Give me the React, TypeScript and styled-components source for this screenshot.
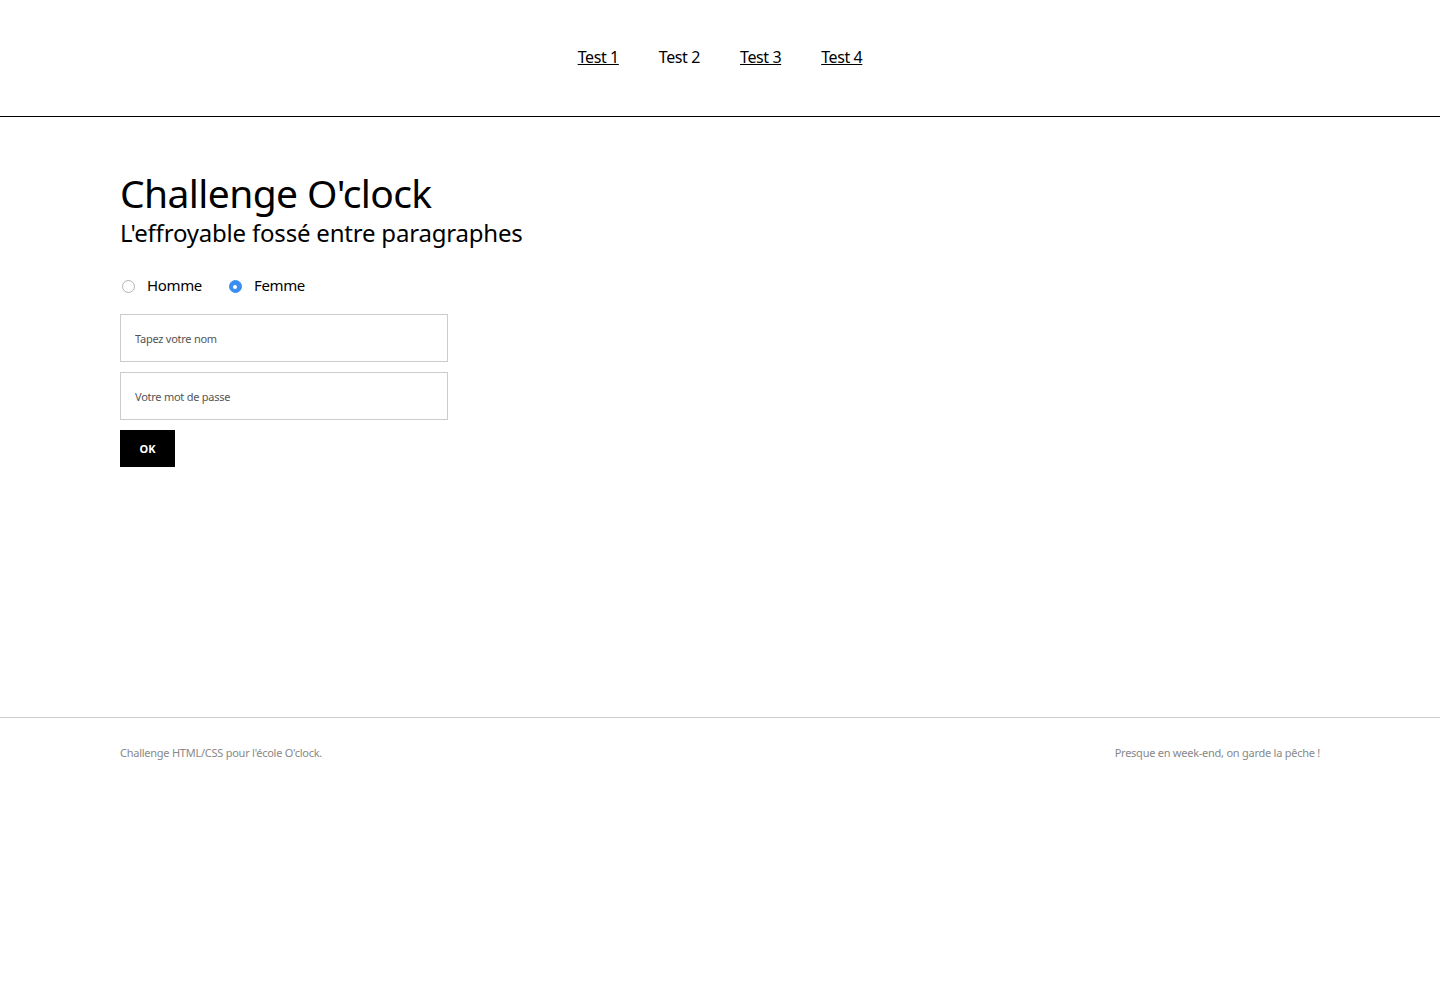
import React from "react";
import styled, { createGlobalStyle } from "styled-components";

const Global = createGlobalStyle`
  html, body { margin: 0; padding: 0; background: #fff; }
  body { font-family: "Noto Sans", "Liberation Sans", sans-serif; color: #000; }
  * { box-sizing: border-box; }
`;

const Header = styled.header`
  height: 117px;
  border-bottom: 1px solid #000;
  display: flex;
  justify-content: center;
  align-items: flex-start;
  padding-top: 46px;
`;

const Nav = styled.nav`
  display: flex;
  gap: 40px;
`;

const NavLink = styled.a<{ $plain?: boolean }>`
  font-size: 16px;
  line-height: 22px;
  color: #000;
  text-decoration: ${(p) => (p.$plain ? "none" : "underline")};
  letter-spacing: -0.4px;
`;

const Main = styled.main`
  padding: 54px 120px 0;
  height: 600px;
`;

const Title = styled.h1`
  margin: 0;
  font-size: 39px;
  font-weight: 400;
  line-height: 44px;
  letter-spacing: -0.6px;
`;

const Subtitle = styled.h2`
  margin: 3px 0 0;
  font-size: 24px;
  font-weight: 400;
  line-height: 30px;
  letter-spacing: -0.2px;
`;

const Form = styled.form`
  margin-top: 25px;
  display: flex;
  flex-direction: column;
  align-items: flex-start;
`;

const RadioRow = styled.div`
  display: flex;
  gap: 25px;
  height: 24px;
  align-items: center;
  margin-bottom: 17px;
`;

const RadioLabel = styled.label`
  display: flex;
  align-items: center;
  gap: 12px;
  font-size: 15px;
  letter-spacing: -0.35px;
`;

const Radio = styled.input`
  appearance: none;
  margin: 3px 0 0 2px;
  width: 13px;
  height: 13px;
  border-radius: 50%;
  border: 1px solid #b4b4b4;
  background: #fff;
  display: grid;
  place-items: center;
  &:checked {
    border-color: #3a8ef3;
    background: #3a8ef3;
  }
  &:checked::after {
    content: "";
    width: 4px;
    height: 4px;
    border-radius: 50%;
    background: #fff;
  }
`;

const Field = styled.input`
  width: 328px;
  height: 48px;
  border: 1px solid #ccc;
  padding: 0 14px;
  margin: 0 0 10px;
  font-family: inherit;
  font-size: 11px;
  letter-spacing: -0.25px;
  outline: none;
  &::placeholder { color: #555; }
`;

const Button = styled.button`
  width: 55px;
  height: 37px;
  background: #000;
  color: #fff;
  border: none;
  font-family: inherit;
  font-size: 11px;
  font-weight: 700;
  padding: 0;
`;

const Footer = styled.footer`
  border-top: 1px solid #ccc;
  padding: 27px 120px 0;
  display: flex;
  justify-content: space-between;
  font-size: 11px;
  letter-spacing: -0.25px;
  color: #888;
  height: 266px;
`;

export default function App() {
  return (
    <>
      <Global />
      <Header>
        <Nav>
          <NavLink href="#">Test 1</NavLink>
          <NavLink $plain>Test 2</NavLink>
          <NavLink href="#">Test 3</NavLink>
          <NavLink href="#">Test 4</NavLink>
        </Nav>
      </Header>
      <Main>
        <Title>Challenge O'clock</Title>
        <Subtitle>L'effroyable fossé entre paragraphes</Subtitle>
        <Form onSubmit={(e) => e.preventDefault()}>
          <RadioRow>
            <RadioLabel>
              <Radio type="radio" name="genre" value="h" />
              Homme
            </RadioLabel>
            <RadioLabel>
              <Radio type="radio" name="genre" value="f" defaultChecked />
              Femme
            </RadioLabel>
          </RadioRow>
          <Field type="text" placeholder="Tapez votre nom" />
          <Field type="password" placeholder="Votre mot de passe" />
          <Button type="submit">OK</Button>
        </Form>
      </Main>
      <Footer>
        <span>Challenge HTML/CSS pour l'école O'clock.</span>
        <span>Presque en week-end, on garde la pêche !</span>
      </Footer>
    </>
  );
}
